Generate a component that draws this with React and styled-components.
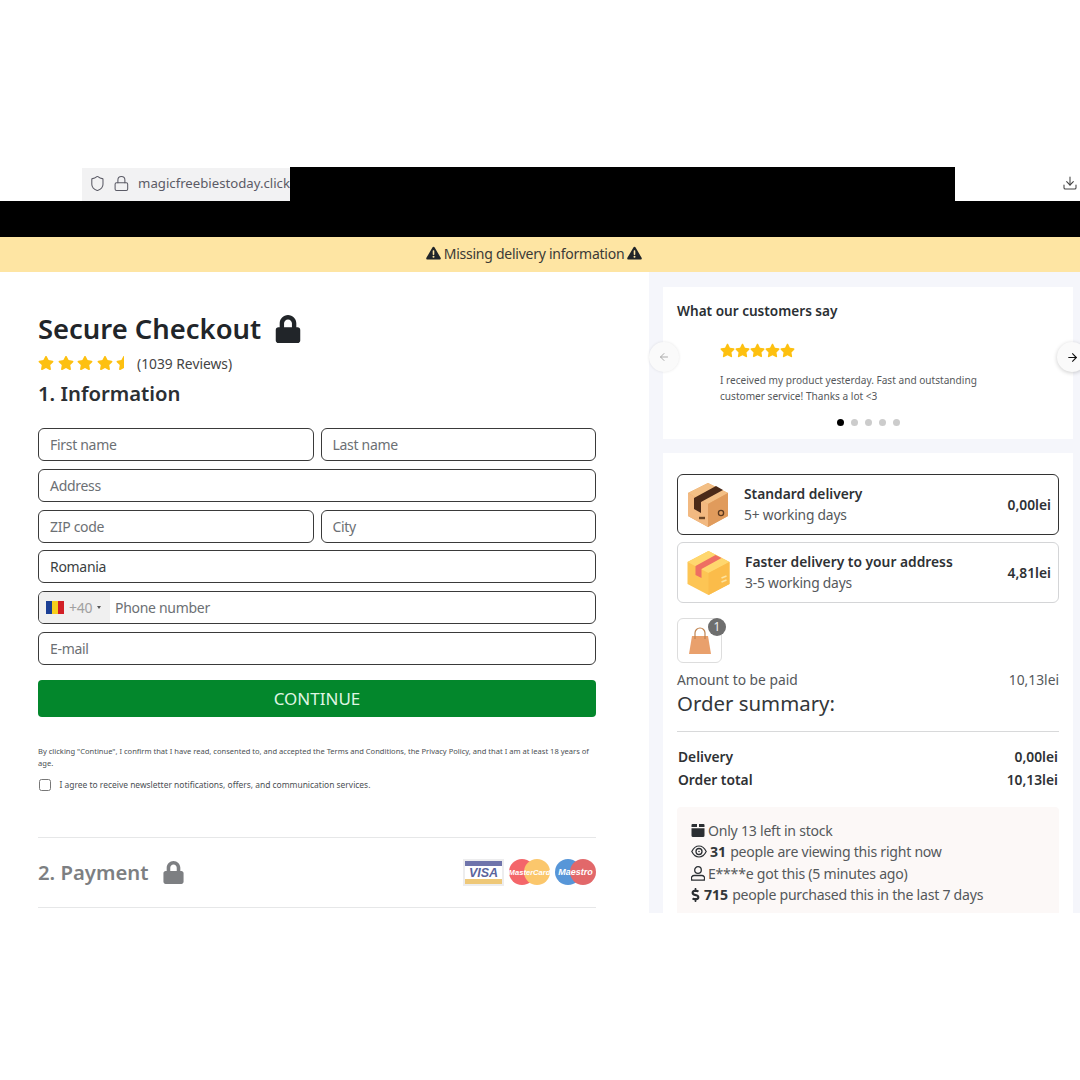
import React from "react";
import styled, { createGlobalStyle } from "styled-components";
import { FaLock, FaStar, FaStarHalf, FaDollarSign } from "react-icons/fa";
import { Shield, Lock, Download, ArrowLeft, ArrowRight } from "lucide-react";

const Global = createGlobalStyle`
  html, body { margin: 0; padding: 0; background: #fff; }
  * { box-sizing: border-box; }
  body { font-family: "Noto Sans", "Open Sans", sans-serif; color: #212529; }
`;
const Page = styled.div`
  width: 1080px; height: 1080px; padding-top: 167px; background: #fff; overflow: hidden;
`;
const BrowserBar = styled.div`
  height: 34px; display: flex; align-items: stretch; padding-left: 82px; background: #fff;
`;
const UrlBox = styled.div`
  width: 208px; display: flex; align-items: center; gap: 8px; padding: 0 0 3px 6.5px; background: #f2f2f3;
  color: #5b5b66; font-size: 13.2px; white-space: nowrap; overflow: hidden; margin-top: 1px;
`;
const Redaction = styled.div`width: 665px; background: #000;`;
const DownloadSlot = styled.div`
  flex: 1; display: flex; justify-content: flex-end; align-items: center; padding: 0 2px 3px 0; color: #444;
`;
const BlackBar = styled.div`height: 36px; background: #000;`;
const Alert = styled.div`
  height: 35px; background: #fee5a3; display: flex; align-items: center; justify-content: center; gap: 3px;
  padding: 0 12px 3px 0; font-size: 14px; letter-spacing: -0.25px; color: #3b3a36;
`;
const Main = styled.div`display: flex; height: 641px; overflow: hidden;`;
const Left = styled.section`
  width: 649px; padding: 40px 53px 0 38px; background: #fff;
`;
const Right = styled.aside`
  flex: 1; background: #f5f6fb; padding: 15px 7px 0 14px; display: flex; flex-direction: column; gap: 14px;
`;
const Title = styled.h1`
  margin: 0; height: 34px; font-size: 27.4px; line-height: 34px; font-weight: 600; color: #212529;
  display: flex; align-items: center; gap: 13px;
`;
const RatingRow = styled.div`
  margin-top: 6px; height: 22px; display: flex; align-items: center; font-size: 13.8px; color: #444;
`;
const StarRow = styled.span`
  display: inline-flex; gap: ${p => p.$gap}px; color: #fdc010; margin-right: ${p => p.$mr || 0}px; align-items: center;
`;
const SectionTitle = styled.h2`
  margin: 5px 0 21px; height: 28px; font-size: 20.3px; line-height: 28px; font-weight: 600; color: #2b2f33;
`;
const Form = styled.div`display: flex; flex-direction: column; gap: 7.8px;`;
const Row = styled.div`display: flex; gap: 7px;`;
const Field = styled.div`
  flex: 0 0 33px; height: 33px; border: 1px solid #3a3a3a; border-radius: 6px; display: flex; align-items: center;
  padding-left: 11px; font-size: 14px; letter-spacing: -0.3px; color: ${p => (p.$filled ? "#3b3f42" : "#6c7074")}; overflow: hidden;
  ${Row} > & { flex: 1 1 0; }
`;
const PhoneField = styled(Field)`padding-left: 0;`;
const Prefix = styled.div`
  width: 71px; height: 100%; background: #f0f0f0; display: flex; align-items: center; padding-left: 7px; gap: 5px;
  margin-right: 5px; color: #a0a0a0; font-size: 14px;
`;
const Flag = styled.span`
  width: 18px; height: 13px; display: flex;
`;
const FlagBand = styled.span`flex: 1; background: ${p => p.$c};`;
const Caret = styled.span`
  width: 0; height: 0; border-left: 2.5px solid transparent; border-right: 2.5px solid transparent;
  border-top: 3.5px solid #555;
`;
const Continue = styled.button`
  display: block; width: 100%; height: 37px; margin-top: 15px; border: 0; border-radius: 4px; background: #03872c;
  color: #dff5e2; font: 400 17px "Noto Sans", sans-serif; padding: 0;
`;
const Legal = styled.p`
  margin: 28px 0 0; font-size: 7.55px; line-height: 12px; color: #4b4f53;
`;
const ConsentRow = styled.label`
  margin-top: 9px; display: flex; align-items: center; gap: 9px; font-size: 8.45px; color: #4b4f53; height: 14px;
`;
const Check = styled.span`
  width: 12px; height: 12px; border: 1px solid #777; border-radius: 2.5px; background: #fff; margin-left: 0.5px;
`;
const PaymentRow = styled.div`
  margin-top: 45px; height: 71px; border-top: 1px solid #e6e7e8; border-bottom: 1px solid #e6e7e8;
  display: flex; align-items: center; justify-content: space-between; color: #7d7f82;
`;
const PaymentTitle = styled.div`
  display: flex; align-items: center; gap: 14px; font-size: 20.3px; font-weight: 600;
`;
const Logos = styled.div`display: flex; align-items: center; gap: 5px;`;
const Card = styled.div`background: #fff;`;
const ReviewCard = styled(Card)`
  position: relative; flex: 0 0 152px; padding: 14px 14px 0;
`;
const ReviewHeading = styled.h3`
  margin: 0; font-size: 13.6px; line-height: 20px; font-weight: 600; color: #2b2f33;
`;
const ReviewBody = styled.div`padding: 20px 0 0 43px;`;
const ReviewText = styled.p`
  margin: 9px 0 0; width: 280px; font-size: 10.1px; line-height: 16px; color: #55585b;
`;
const Dots = styled.div`display: flex; justify-content: center; gap: 7px; margin-top: 15px;`;
const Dot = styled.span`
  width: 7px; height: 7px; border-radius: 50%; background: ${p => (p.$active ? "#000" : "#ccc")};
`;
const Nav = styled.div`
  position: absolute; top: 55px; width: 30px; height: 30px; border-radius: 50%; display: flex; align-items: center;
  background: #fafafa; box-shadow: 0 0 3px rgba(0,0,0,.1);
  ${p => (p.$side === "left" ? "left: -14px; justify-content: center; color: #aaa;" : "right: -14px; padding-left: 9px; color: #111; box-shadow: 0 1px 4px rgba(0,0,0,.2);")}
`;
const OrderCard = styled(Card)`flex: 1; padding: 21px 14px 0;`;
const Shipping = styled.div`
  height: 61px; border: 1px solid ${p => (p.$selected ? "#333" : "#d4d5d7")}; border-radius: 6px; display: flex;
  align-items: center; padding: 0 7px 0 8px; margin-bottom: 7px;
`;
const ShipText = styled.div`flex: 1; margin-left: 14px; padding-bottom: 2px;`;
const ShipName = styled.div`font-size: 13.8px; line-height: 21px; font-weight: 600; color: #2e3134;`;
const ShipNote = styled.div`font-size: 13.8px; line-height: 21px; letter-spacing: -0.2px; color: #55585b;`;
const ShipPrice = styled.div`font-size: 13.8px; font-weight: 600; color: #2e3134;`;
const Thumb = styled.div`
  position: relative; width: 45px; height: 45px; margin-top: 15px; border: 1px solid #ddd; border-radius: 6px;
  display: flex; align-items: center; justify-content: center;
`;
const Badge = styled.span`
  position: absolute; top: -1px; right: -5px; width: 18px; height: 18px; border-radius: 50%; background: #6e6e6e;
  color: #eee; font-size: 12px; line-height: 18px; text-align: center;
`;
const SpaceRow = styled.div`
  display: flex; justify-content: space-between; color: ${p => p.$c || "#55585b"}; font-size: 13.8px;
  line-height: 23px; font-weight: ${p => p.$w || 400}; padding: ${p => p.$pad || 0};
`;
const SummaryTitle = styled.div`
  font-size: 20.4px; line-height: 24px; color: #33373a; padding-bottom: 16px; border-bottom: 1px solid #d8d9da;
  margin-bottom: 13px;
`;
const Urgency = styled.div`
  margin-top: 16px; padding: 13px 14px 0; height: 110px; background: #fcf8f7; border-radius: 4px;
`;
const UrgencyRow = styled.div`
  display: flex; align-items: center; gap: 3px; height: 21.3px; font-size: 14.1px; letter-spacing: -0.25px;
  color: #55585b; white-space: nowrap;
`;
const Strong = styled.b`font-weight: 700; color: #33373a; margin-right: 1px; letter-spacing: 0;`;
const Dollar = styled(FaDollarSign)`width: 9px; height: 14px; margin-right: 1px;`;

const Stars = ({ size, half, gap, mr }) => (
  <StarRow $gap={gap} $mr={mr}>
    {[...Array(half ? 4 : 5)].map((_, i) => <FaStar key={i} size={size} />)}
    {half && <FaStarHalf size={size} />}
  </StarRow>
);

const TriangleIcon = () => (
  <svg width="15" height="14" viewBox="0 0 15 14" aria-hidden="true">
    <path d="M7.5 .8c.5 0 .9.3 1.1.7l6 10.3c.5.8-.1 1.7-1 1.7H1.400c-.9 0-1.500-.9-1-1.700l6-10.300c.2-.4.6-.7 1.100-.7z" fill="#212529" />
    <rect x="6.7" y="4.3" width="1.6" height="4.6" rx=".6" fill="#fee5a3" />
    <circle cx="7.5" cy="10.7" r="1" fill="#fee5a3" />
  </svg>
);
const BrownBox = () => (
  <svg width="44" height="46" viewBox="0 0 44 46" aria-hidden="true">
    <path d="M22 1 42 11 42 34 22 45 2 34 2 11z" fill="#e7a766" />
    <path d="M22 1 42 11 22 22 2 11z" fill="#f3bf85" />
    <path d="M2 11 22 22 22 45 2 34z" fill="#f2b981" />
    <path d="M22 22 42 11 42 34 22 45z" fill="#e09b5c" />
    <path d="M8 16 30 4 37 8 15 20 15 31 8 27z" fill="#4b2a18" />
    <circle cx="35" cy="31" r="2.6" fill="none" stroke="#5c3a20" strokeWidth="1.3" />
    <path d="M13 36h6" stroke="#6b4526" strokeWidth="2.4" />
  </svg>
);
const YellowBox = () => (
  <svg width="45" height="46" viewBox="0 0 44 46" aria-hidden="true">
    <path d="M22 1 43 12 43 34 22 45 1 34 1 12z" fill="#fdc554" />
    <path d="M22 1 43 12 22 23 1 12z" fill="#ffd76e" />
    <path d="M22 23 43 12 43 34 22 45z" fill="#fbbc4a" />
    <path d="M9 16 29 5 35 8 15 19 15 28 9 25z" fill="#ee6f62" />
    <path d="M35 28l5-2M35 32l5-2" stroke="#fde3a0" strokeWidth="1.6" />
  </svg>
);
const Bag = () => (
  <svg width="24" height="28" viewBox="0 0 24 28" aria-hidden="true">
    <path d="M4 9h16l3 18H1z" fill="#e9a06c" />
    <path d="M7 12V6a5 5 0 0 1 10 0v6" fill="none" stroke="#c08450" strokeWidth="1.2" />
  </svg>
);
const Visa = () => (
  <svg width="41" height="27" viewBox="0 0 41 27" aria-hidden="true">
    <rect width="41" height="27" fill="#ededee" />
    <rect x="2" y="2" width="37" height="5" fill="#6f74ab" />
    <rect x="2" y="7" width="37" height="13" fill="#fff" />
    <rect x="2" y="20" width="37" height="5" fill="#eec878" />
    <text x="20.5" y="18" textAnchor="middle" fontFamily="Liberation Sans" fontStyle="italic" fontWeight="700" fontSize="12.5" fill="#5a649c">VISA</text>
  </svg>
);
const Circles = ({ a, b, label }) => (
  <svg width="41" height="26" viewBox="0 0 41 26" aria-hidden="true">
    <circle cx="13" cy="13" r="13" fill={a} />
    <circle cx="28" cy="13" r="13" fill={b} />
    <text x="20.5" y="16" textAnchor="middle" fontFamily="Liberation Sans" fontStyle="italic" fontWeight="700" fontSize={label.length > 7 ? 7.6 : 9} fill="#fff">{label}</text>
  </svg>
);
const BoxGlyph = () => (
  <svg width="14" height="13" viewBox="0 0 14 13" aria-hidden="true">
    <path d="M1.500 0H6v3H.5V1a1 1 0 0 1 1-1zM8 0h4.500a1 1 0 0 1 1 1v2H8zM.5 4.200h13V11.500a1.500 1.500 0 0 1-1.500 1.500H2a1.500 1.500 0 0 1-1.500-1.500z" fill="#2b2f33" />
  </svg>
);
const EyeGlyph = () => (
  <svg width="16" height="13" viewBox="0 0 16 13" fill="none" stroke="#2b2f33" aria-hidden="true">
    <path d="M.8 6.500C2.500 3 5 1 8 1s5.500 2 7.200 5.500C13.500 10 11 12 8 12S2.500 10 .8 6.500z" strokeWidth="1.2" />
    <circle cx="8" cy="6.500" r="3" strokeWidth="1.300" />
    <circle cx="8" cy="6.500" r=".8" fill="#2b2f33" stroke="none" />
  </svg>
);
const PersonGlyph = () => (
  <svg width="14" height="15" viewBox="0 0 14 15" fill="none" stroke="#2b2f33" strokeWidth="1.300" aria-hidden="true">
    <circle cx="7" cy="4" r="3.300" />
    <path d="M3.500 9.500h7A2.800 2.800 0 0 1 13.300 13.500v.7H.7v-.7A2.800 2.800 0 0 1 3.500 9.500z" />
  </svg>
);

export default function App() {
  return (
    <Page>
      <Global />
      <BrowserBar>
        <UrlBox>
          <Shield size={17} strokeWidth={1.5} />
          <Lock size={17} strokeWidth={1.5} />
          <span>magicfreebiestoday.click</span>
        </UrlBox>
        <Redaction />
        <DownloadSlot><Download size={16} strokeWidth={1.6} /></DownloadSlot>
      </BrowserBar>
      <BlackBar />
      <Alert><TriangleIcon /> <span>Missing delivery information</span> <TriangleIcon /></Alert>
      <Main>
        <Left>
          <Title>Secure Checkout <FaLock size={28} /></Title>
          <RatingRow><Stars size={16} half gap={3.5} mr={5} />(1039 Reviews)</RatingRow>
          <SectionTitle>1. Information</SectionTitle>
          <Form>
            <Row><Field>First name</Field><Field>Last name</Field></Row>
            <Field>Address</Field>
            <Row><Field>ZIP code</Field><Field>City</Field></Row>
            <Field $filled>Romania</Field>
            <PhoneField>
              <Prefix>
                <Flag><FlagBand $c="#1b3f95" /><FlagBand $c="#f7cf1d" /><FlagBand $c="#d21f26" /></Flag>
                +40 <Caret />
              </Prefix>
              Phone number
            </PhoneField>
            <Field>E-mail</Field>
          </Form>
          <Continue>CONTINUE</Continue>
          <Legal>By clicking "Continue", I confirm that I have read, consented to, and accepted the Terms and Conditions, the Privacy Policy, and that I am at least 18 years of age.</Legal>
          <ConsentRow><Check /> I agree to receive newsletter notifications, offers, and communication services.</ConsentRow>
          <PaymentRow>
            <PaymentTitle>2. Payment <FaLock size={23} /></PaymentTitle>
            <Logos>
              <Visa />
              <Circles a="#f4666a" b="#fbc76c" label="MasterCard" />
              <Circles a="#5796d8" b="#e2686a" label="Maestro" />
            </Logos>
          </PaymentRow>
        </Left>
        <Right>
          <ReviewCard>
            <ReviewHeading>What our customers say</ReviewHeading>
            <Nav $side="left"><ArrowLeft size={12} /></Nav>
            <Nav $side="right"><ArrowRight size={13} /></Nav>
            <ReviewBody>
              <Stars size={15} gap={0} />
              <ReviewText>I received my product yesterday. Fast and outstanding customer service! Thanks a lot &lt;3</ReviewText>
            </ReviewBody>
            <Dots><Dot $active /><Dot /><Dot /><Dot /><Dot /></Dots>
          </ReviewCard>
          <OrderCard>
            <Shipping $selected>
              <BrownBox />
              <ShipText><ShipName>Standard delivery</ShipName><ShipNote>5+ working days</ShipNote></ShipText>
              <ShipPrice>0,00lei</ShipPrice>
            </Shipping>
            <Shipping>
              <YellowBox />
              <ShipText><ShipName>Faster delivery to your address</ShipName><ShipNote>3-5 working days</ShipNote></ShipText>
              <ShipPrice>4,81lei</ShipPrice>
            </Shipping>
            <Thumb><Bag /><Badge>1</Badge></Thumb>
            <SpaceRow $pad="5px 0 0">
              <span>Amount to be paid</span><span>10,13lei</span>
            </SpaceRow>
            <SummaryTitle>Order summary:</SummaryTitle>
            <SpaceRow $c="#2e3134" $w={600} $pad="0 1px"><span>Delivery</span><span>0,00lei</span></SpaceRow>
            <SpaceRow $c="#2e3134" $w={600} $pad="0 1px"><span>Order total</span><span>10,13lei</span></SpaceRow>
            <Urgency>
              <UrgencyRow><BoxGlyph /> Only 13 left in stock</UrgencyRow>
              <UrgencyRow><EyeGlyph /> <Strong>31</Strong> people are viewing this right now</UrgencyRow>
              <UrgencyRow><PersonGlyph /> E****e got this (5 minutes ago)</UrgencyRow>
              <UrgencyRow><Dollar color="#2b2f33" /> <Strong>715</Strong> people purchased this in the last 7 days</UrgencyRow>
            </Urgency>
          </OrderCard>
        </Right>
      </Main>
    </Page>
  );
}
